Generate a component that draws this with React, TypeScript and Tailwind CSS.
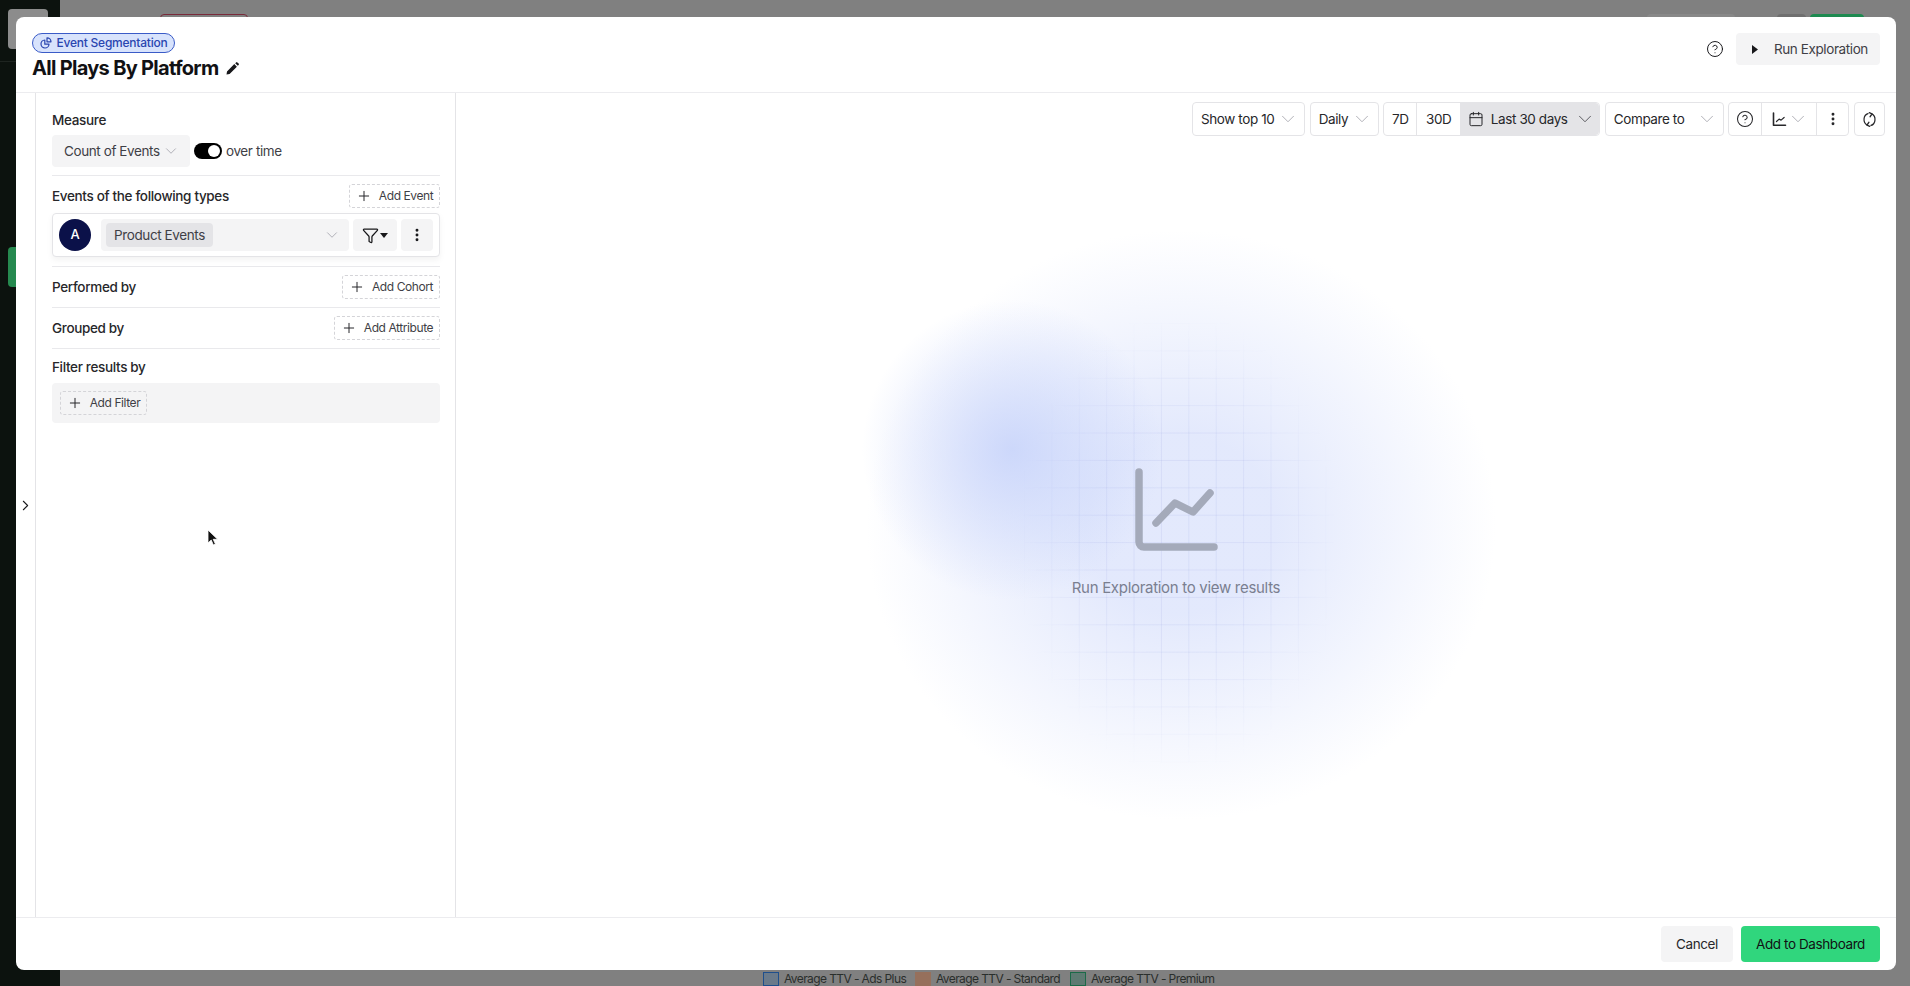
import { Calendar, ChevronDown, ChevronRight, CircleHelp, EllipsisVertical, Funnel, Plus } from 'lucide-react';

function Chevron({ dark = false, size = 22 }: { dark?: boolean; size?: number }) {
  return <ChevronDown size={size} strokeWidth={size > 18 ? 0.9 : 1.1} className={`shrink-0 ${dark ? 'text-[#3f3f46]' : 'text-[#a1a1aa]'}`} />;
}

function DashedButton({ label, className }: { label: string; className: string }) {
  return (
    <button className={`flex h-6 items-center justify-center gap-[7px] rounded-[3px] border border-dashed border-[#d4d4d8] text-[12px] tracking-[-0.035em] text-[#3f3f46] ${className}`}>
      <Plus size={16} strokeWidth={1.5} className="text-[#27272a]" />
      {label}
    </button>
  );
}

function Divider() {
  return <div className="h-px bg-[#e9e9ec]" />;
}

function RowLabel({ children }: { children: string }) {
  return <span className="text-[13.5px] font-medium leading-5 tracking-[-0.025em] text-[#27272a]">{children}</span>;
}

function Sidebar() {
  return (
    <aside className="flex w-[421px] shrink-0 flex-col border-x border-[#e4e4e7] pl-4 pr-[15px] pt-[17px]">
      <RowLabel>Measure</RowLabel>
      <div className="mt-[5px] flex items-center gap-1">
        <button className="flex h-8 w-[138px] items-center gap-[2px] rounded bg-[#f4f4f5] pl-3 text-[13.5px] tracking-[-0.03em] text-[#3f3f46]">
          Count of Events
          <Chevron size={18} />
        </button>
        <div className="flex h-4 w-7 items-center justify-end rounded-full bg-black pr-[2px]">
          <div className="h-3 w-3 rounded-full bg-white" />
        </div>
        <span className="text-[13.5px] tracking-[-0.03em] text-[#3f3f46]">over time</span>
      </div>
      <div className="mt-2"><Divider /></div>

      <div className="mt-2 flex items-center justify-between">
        <RowLabel>Events of the following types</RowLabel>
        <DashedButton label="Add Event" className="w-[91px]" />
      </div>
      <div className="mt-[5px] flex h-[44px] items-center gap-[10px] rounded border border-[#e4e4e7] bg-white px-[6px] shadow-[0_3px_6px_rgba(0,0,0,0.05)]">
        <div className="flex h-8 w-8 shrink-0 items-center justify-center rounded-full bg-[#0b1149] text-[13px] font-medium text-white">A</div>
        <div className="flex h-8 w-[248px] shrink-0 items-center justify-between rounded bg-[#f4f4f5] pl-[5px] pr-[8px]">
          <span className="flex h-6 w-[107px] items-center justify-center rounded bg-[#e4e4e7] text-[13.5px] tracking-[-0.03em] text-[#3f3f46]">Product Events</span>
          <Chevron size={18} />
        </div>
        <div className="-ml-[6px] flex gap-1">
          <button className="flex h-8 w-11 items-center justify-center gap-[1px] rounded bg-[#f4f4f5] text-[#18181b]">
            <Funnel size={17} strokeWidth={1.8} />
            <svg width="8" height="5" viewBox="0 0 8 5"><path d="M0 0h8L4 5z" fill="currentColor" /></svg>
          </button>
          <button className="flex h-8 w-8 items-center justify-center rounded bg-[#f4f4f5] text-[#18181b]">
            <EllipsisVertical size={16} strokeWidth={2.4} />
          </button>
        </div>
      </div>
      <div className="mt-[9px]"><Divider /></div>

      <div className="mt-2 flex items-center justify-between">
        <RowLabel>Performed by</RowLabel>
        <DashedButton label="Add Cohort" className="w-[98px]" />
      </div>
      <div className="mt-2"><Divider /></div>

      <div className="mt-2 flex items-center justify-between">
        <RowLabel>Grouped by</RowLabel>
        <DashedButton label="Add Attribute" className="w-[106px]" />
      </div>
      <div className="mt-2"><Divider /></div>

      <div className="mt-[5px]"><RowLabel>Filter results by</RowLabel></div>
      <div className="mt-[5px] flex h-10 items-center rounded bg-[#f4f4f5] px-2">
        <DashedButton label="Add Filter" className="w-[87px]" />
      </div>
    </aside>
  );
}

function Toolbar() {
  const box = 'flex h-[34px] items-center rounded border border-[#e4e4e7] bg-white text-[13.5px] tracking-[-0.03em] text-[#27272a]';
  return (
    <div className="relative flex h-[43px] shrink-0 items-end justify-end gap-[4.6px] pr-[11px]">
      <button className={`${box} w-[113px] justify-between pl-2 pr-[5px]`}>Show top 10<Chevron /></button>
      <button className={`${box} w-[69px] justify-between pl-2 pr-[5px]`}>Daily<Chevron /></button>
      <div className={`${box} w-[217px]`}>
        <span className="flex h-full w-[33px] items-center justify-center border-r border-[#e4e4e7]">7D</span>
        <span className="flex h-full w-[43px] items-center justify-center">30D</span>
        <span className="flex h-full flex-1 items-center justify-between rounded-r bg-[#e4e4e7] pl-2 pr-[3px]">
          <Calendar size={16} strokeWidth={1.5} />
          <span>Last 30 days</span>
          <Chevron dark />
        </span>
      </div>
      <button className={`${box} w-[119px] justify-between pl-2 pr-[5px]`}>Compare to<Chevron /></button>
      <div className={`${box} w-[121px]`}>
        <span className="flex h-full w-[33px] items-center justify-center border-r border-[#e4e4e7]"><CircleHelp size={18} strokeWidth={1.4} /></span>
        <span className="flex h-full w-[55px] items-center justify-center border-r border-[#e4e4e7] pl-[3px]">
          <svg width="15" height="15" viewBox="0 0 15 15" fill="none" stroke="#27272a" strokeWidth="1.6" strokeLinecap="round" strokeLinejoin="round">
            <path d="M1.5 1v12.2h12" />
            <path d="M4.5 9.5l2.6-2.4 2 1 3-2.6" strokeWidth="1.2" />
          </svg>
          <Chevron />
        </span>
        <span className="flex h-full flex-1 items-center justify-center"><EllipsisVertical size={16} strokeWidth={2.4} /></span>
      </div>
      <button className={`${box} w-[31px] justify-center`}>
        <svg width="15" height="17" viewBox="0 0 16 16" preserveAspectRatio="none" fill="none" stroke="#27272a" strokeWidth="1.3" strokeLinecap="round" strokeLinejoin="round">
          <path d="M6.4 2.4A5.8 5.8 0 0 0 5.4 13.2" />
          <path d="M9.6 13.6A5.8 5.8 0 0 0 10.6 2.8" />
          <path d="M7.4 10.6l-2 2.6 2.8 1.2M8.6 5.4l2-2.6-2.8-1.2" />
        </svg>
      </button>
    </div>
  );
}

function EmptyResults() {
  return (
    <div className="relative flex flex-1 flex-col items-center pt-[332px]">
      <svg width="90" height="90" viewBox="0 0 90 90" fill="none" stroke="#a4aaba" strokeWidth="7.5" strokeLinecap="round" strokeLinejoin="round">
        <path d="M8 4v70a5 5 0 0 0 5 5h70" />
        <path d="M25 55l19-20 18 9 17-19" />
      </svg>
      <span className="mt-5 text-[15px] leading-5 tracking-[-0.02em] text-[#7a7f90]">Run Exploration to view results</span>
    </div>
  );
}

function Modal() {
  return (
    <div className="absolute left-4 top-[17px] flex h-[953px] w-[1880px] flex-col overflow-hidden rounded-lg bg-white">
      <header className="flex h-[76px] shrink-0 items-start justify-between border-b border-[#ececef] pl-4 pr-4 pt-4">
        <div>
          <div className="flex h-5 w-[143px] items-center justify-center gap-[5px] rounded-full border border-[#3a5bc7] bg-[#d8e3fc] text-[12px] font-medium tracking-[-0.02em] text-[#2a46b0]">
            <svg width="12" height="12" viewBox="0 0 12 12" fill="none" stroke="currentColor" strokeWidth="1.2" strokeLinejoin="round">
              <path d="M4.8 3a4 4 0 1 0 4.2 4.2H4.8z" />
              <path d="M7 .8a4 4 0 0 1 4 4H7z" />
            </svg>
            Event Segmentation
          </div>
          <div className="mt-[1px] flex items-center gap-2">
            <h1 className="text-[20px] font-bold leading-7 tracking-[-0.035em] text-[#111114]">All Plays By Platform</h1>
            <svg width="13" height="13" viewBox="0 0 13 13" fill="#18181b"><path d="M0.5 12.5 1 9.4 8.3 2.1l2.6 2.6-7.3 7.3zM9.2 1.2l.9-.8a.9.9 0 0 1 1.3 0l1.2 1.2a.9.9 0 0 1 0 1.3l-.8.9z" /></svg>
          </div>
        </div>
        <div className="flex items-center gap-[12px]">
          <CircleHelp size={18} strokeWidth={1.3} className="text-[#18181b]" />
          <button className="flex h-8 w-[144px] items-center gap-[16px] rounded bg-[#f4f4f5] pl-[16px] text-[13.5px] tracking-[-0.03em] text-[#3f3f46]">
            <svg width="6" height="9" viewBox="0 0 6 9"><path d="M0 0l6 4.5L0 9z" fill="#18181b" /></svg>
            Run Exploration
          </button>
        </div>
      </header>

      <div className="flex min-h-0 flex-1">
        <div className="flex w-[19px] shrink-0 items-center justify-center">
          <ChevronRight size={17} strokeWidth={1.5} className="text-[#18181b]" />
        </div>
        <Sidebar />
        <main className="relative flex flex-1 flex-col overflow-hidden">
          <div className="absolute inset-0 bg-[radial-gradient(circle_150px_at_556px_357px,rgba(196,209,250,0.8),rgba(196,209,250,0)),radial-gradient(ellipse_315px_295px_at_725px_432px,rgba(222,229,252,0.85)_30%,rgba(222,229,252,0))]" />
          <div className="absolute left-[568px] top-[230px] h-[440px] w-[310px] bg-[linear-gradient(to_right,rgba(90,110,200,0.09)_1px,transparent_1px),linear-gradient(to_bottom,rgba(90,110,200,0.09)_1px,transparent_1px)] bg-[size:27.4px_27.4px] [mask-image:radial-gradient(ellipse_at_center,black_35%,transparent_75%)]" />
          <Toolbar />
          <EmptyResults />
        </main>
      </div>

      <footer className="flex h-[53px] shrink-0 items-start justify-end gap-2 border-t border-[#ececef] pr-4 pt-2">
        <button className="h-9 w-[72px] rounded bg-[#f4f4f5] text-[13.5px] tracking-[-0.03em] text-[#27272a]">Cancel</button>
        <button className="h-9 w-[139px] rounded bg-[#30d67d] text-[13.5px] tracking-[-0.03em] text-[#111114]">Add to Dashboard</button>
      </footer>
    </div>
  );
}

function Backdrop() {
  return (
    <div className="flex h-[986px] w-[1910px]">
      <div className="flex w-[60px] shrink-0 flex-col bg-[#0c120e] pl-2 pt-[9px]">
        <div className="h-10 w-10 rounded bg-[#8c8c8c]" />
        <div className="ml-[-8px] mt-3 h-px bg-[#1e2420]" />
        <div className="mt-[185px] h-10 w-10 rounded bg-[#26894f]" />
      </div>
      <div className="flex flex-1 flex-col justify-between bg-[#808080]">
        <div className="flex items-start justify-between pl-[100px] pr-[46px] pt-[14px]">
          <div className="h-8 w-[88px] rounded border border-[#7a2a3a]" />
          <div className="flex gap-1">
            <div className="h-8 w-[88px] rounded bg-[#888888]" />
            <div className="ml-[38px] h-8 w-[29px] rounded bg-[#6f6f6f]" />
            <div className="h-8 w-[54px] rounded bg-[#1d8a50]" />
          </div>
        </div>
        <div className="flex h-[14px] items-start whitespace-nowrap pl-[703px] text-[12px] leading-[14px] tracking-[-0.05em] text-[#2a2e2c]">
          <span className="h-[14px] w-4 border border-[#1e4f8c] bg-[#6a7a8a]" />
          <span className="ml-[5px] w-[131px]">Average TTV - Ads Plus</span>
          <span className="h-[14px] w-4 bg-[#96705c]" />
          <span className="ml-[5px] w-[134px]">Average TTV - Standard</span>
          <span className="h-[14px] w-4 border border-[#1b6a48] bg-[#5e7a72]" />
          <span className="ml-[5px]">Average TTV - Premium</span>
        </div>
      </div>
    </div>
  );
}

export default function App() {
  return (
    <div className="relative h-[986px] w-[1910px] overflow-hidden font-['Inter',sans-serif]">
      <Backdrop />
      <Modal />
      <svg className="absolute left-[207px] top-[529px]" width="14" height="18" viewBox="0 0 14 18">
        <path d="M1 1v13l3.2-3 2.2 5 2-.9-2.2-4.8h4.4z" fill="#111" stroke="#fff" strokeWidth="0.8" />
      </svg>
    </div>
  );
}
